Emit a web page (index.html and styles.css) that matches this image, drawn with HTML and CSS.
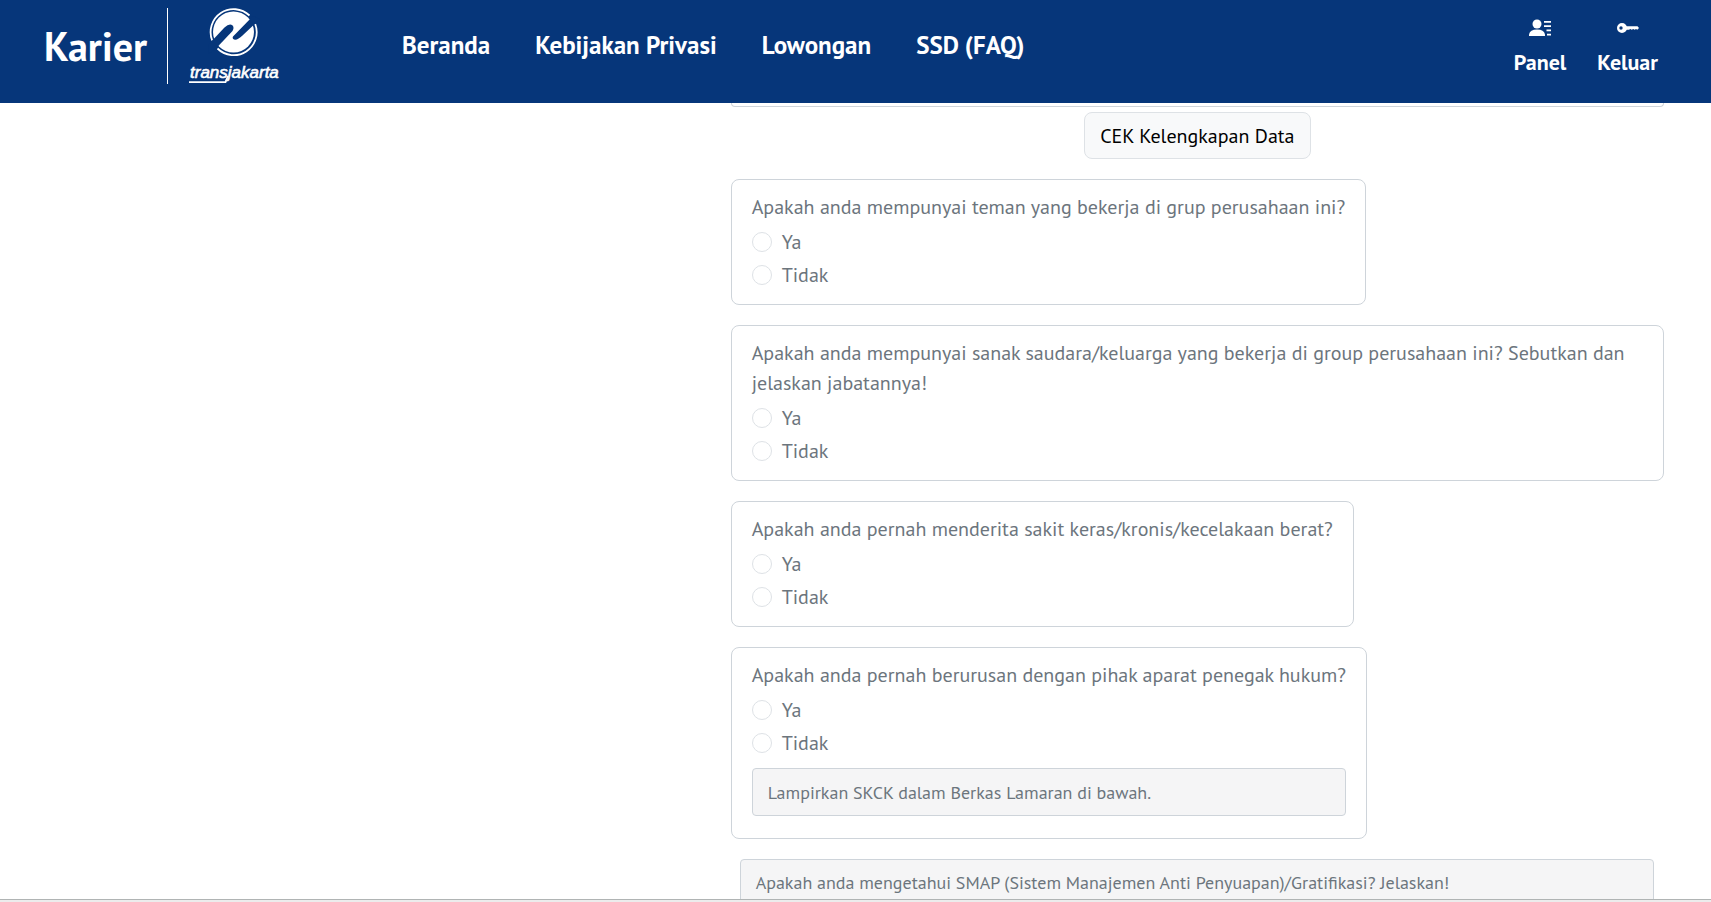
FILE: index.html
```html
<!DOCTYPE html>
<html lang="id">
<head>
<meta charset="utf-8">
<meta name="viewport" content="width=device-width, initial-scale=1">
<title>Karier Transjakarta</title>
<link rel="stylesheet" href="styles.css">
</head>
<body>
<header class="topbar">
  <div class="brand">
    <a class="brand-name" href="#">Karier</a>
    <a class="brand-logo" href="#" aria-label="Transjakarta">
      <svg width="100" height="76" viewBox="0 0 100 76">
        <circle cx="45.500" cy="24" r="20.500" fill="#fff"/>
        <g fill="none" stroke="#fff" stroke-width="1.800">
          <path d="M24.200 32.500A23 23 0 0 1 61.500 7.500"/>
          <path d="M67.200 16A23 23 0 0 1 29.500 40.500"/>
        </g>
        <path d="M21 36 36.500 19.500Q41.500 15 44.500 17.500Q46.500 19.500 44.500 23L27 41.500L20 46Z" fill="#06367a"/>
        <path d="M45 28.500 65 8 72 11 54.500 27.500Q49.500 32.500 46 31.500Q44 30.500 45 28.500Z" fill="#06367a"/>
        <path d="M1 74.200H37.500L40 68" fill="none" stroke="#fff" stroke-width="1.800"/>
        <text class="logo-text" x="2" y="70">transjakarta</text>
      </svg>
    </a>
  </div>
  <nav class="nav">
    <a href="#">Beranda</a>
    <a href="#">Kebijakan Privasi</a>
    <a href="#">Lowongan</a>
    <a href="#">SSD (FAQ)</a>
  </nav>
  <nav class="account">
    <a href="#">
      <svg width="24" height="24" viewBox="0 0 24 24" fill="#fff"><circle cx="9" cy="8" r="4.500"/><path d="M1 20v-1.500Q2 13.500 9 13.500T17 18.500V20Z"/><path d="M16 5h7v1.800h-7zM16 9.200h7V11h-7zM18.500 13.500H23v1.800h-4.500zM19 17.700h4v1.800h-4z"/></svg>
      <span>Panel</span>
    </a>
    <a href="#">
      <svg width="24" height="24" viewBox="0 0 24 24" fill="#fff"><path fill-rule="evenodd" d="M6 7a5 5 0 1 1 0 10A5 5 0 0 1 6 7ZM5 10.300a1.700 1.700 0 1 0 0 3.400 1.700 1.700 0 0 0 0-3.400Z"/><path d="M10 10.200h11.500L23 12l-1.700 1.800-1.300-.8-1.300.8-1.500-.8-1.400.8-1.500-.8-1.300.8H10Z"/></svg>
      <span>Keluar</span>
    </a>
  </nav>
</header>
<main class="viewport">
  <form class="form">
    <div class="panel-end"></div>
    <button class="check" type="button">CEK Kelengkapan Data</button>
    <fieldset class="card">
      <legend>Apakah anda mempunyai teman yang bekerja di grup perusahaan ini?</legend>
      <label><input type="radio" name="teman">Ya</label>
      <label><input type="radio" name="teman">Tidak</label>
    </fieldset>
    <fieldset class="card">
      <legend>Apakah anda mempunyai sanak saudara/keluarga yang bekerja di group perusahaan ini? Sebutkan dan jelaskan jabatannya!</legend>
      <label><input type="radio" name="keluarga">Ya</label>
      <label><input type="radio" name="keluarga">Tidak</label>
    </fieldset>
    <fieldset class="card">
      <legend>Apakah anda pernah menderita sakit keras/kronis/kecelakaan berat?</legend>
      <label><input type="radio" name="sakit">Ya</label>
      <label><input type="radio" name="sakit">Tidak</label>
    </fieldset>
    <fieldset class="card">
      <legend>Apakah anda pernah berurusan dengan pihak aparat penegak hukum?</legend>
      <label><input type="radio" name="hukum">Ya</label>
      <label><input type="radio" name="hukum">Tidak</label>
      <input class="field" type="text" aria-label="Catatan SKCK" placeholder="Lampirkan SKCK dalam Berkas Lamaran di bawah.">
    </fieldset>
    <div class="essay">
      <textarea class="field area" aria-label="SMAP" placeholder="Apakah anda mengetahui SMAP (Sistem Manajemen Anti Penyuapan)/Gratifikasi? Jelaskan!"></textarea>
    </div>
  </form>
</main>
<footer class="edge"></footer>
</body>
</html>
```
FILE: styles.css
```css
* { box-sizing: border-box; }
body {
  margin: 0;
  height: 100vh;
  display: flex;
  flex-direction: column;
  overflow: hidden;
  background: #fff;
  color: #6c757d;
  font: 20px/30px "PT Sans", "Noto Sans", sans-serif;
}
a { color: #fff; text-decoration: none; font-weight: 700; }
.topbar {
  display: flex;
  flex: none;
  align-items: flex-start;
  padding: 8px 53px 19px 44px;
  background: #06367a;
}
.brand { display: flex; width: 358px; }
.brand-name {
  width: 124px;
  border-right: 1px solid #fff;
  font-size: 40px;
  line-height: 76px;
}
.brand-logo { margin-left: 20px; }
.brand-logo svg { display: block; }
.logo-text { fill: #fff; stroke: #fff; stroke-width: 0.6px; font: italic 17px "Liberation Sans", sans-serif; }
.nav { display: flex; gap: 45px; font-size: 25px; line-height: 74px; }
.account { display: flex; gap: 31px; margin-left: auto; padding-top: 8px; font-size: 22px; }
.account a { display: flex; flex-direction: column; align-items: center; gap: 7px; }
.viewport { flex: 1; min-height: 0; overflow: hidden; }
.form {
  display: flex;
  flex-direction: column;
  align-items: flex-start;
  width: 54.55%;
  margin: 0 47px 0 auto;
}
.panel-end {
  width: 100%;
  height: 4px;
  border: 1px solid #ced4da;
  border-top: 0;
  border-radius: 0 0 6px 6px;
}
.check {
  align-self: center;
  margin: 5px 0 20px;
  padding: 8px 15px 7px;
  border: 1px solid #dee2e6;
  border-radius: 8px;
  background: #f8f9fa;
  color: #000;
  font: inherit;
}
.card {
  display: flex;
  flex-direction: column;
  min-width: 0;
  margin: 0 0 20px;
  padding: 12px 20px 11px;
  border: 1px solid #ced4da;
  border-radius: 8px;
}
.card legend { float: left; padding: 0; margin-bottom: 5px; }
.card label { display: flex; align-items: center; gap: 10px; margin-bottom: 3px; }
.card input[type="radio"] {
  appearance: none;
  width: 20px;
  height: 20px;
  margin: 0;
  border: 1px solid #dee2e6;
  border-radius: 50%;
  background: #fff;
}
.field {
  width: 100%;
  height: 48px;
  margin: 7px 0 11px;
  padding: 8px 15px;
  border: 1px solid #ced4da;
  border-radius: 4px;
  background: #f5f5f6;
  font: 18px/30px "PT Sans", "Noto Sans", sans-serif;
}
.field::placeholder { color: #6c757d; opacity: 1; }
.essay { width: 100%; padding: 0 10px 0 9px; }
.area { display: block; height: 120px; margin: 0; resize: none; }
.edge { flex: none; height: 3px; border-top: 1px solid #b0b4b4; background: #ececec; }
```
